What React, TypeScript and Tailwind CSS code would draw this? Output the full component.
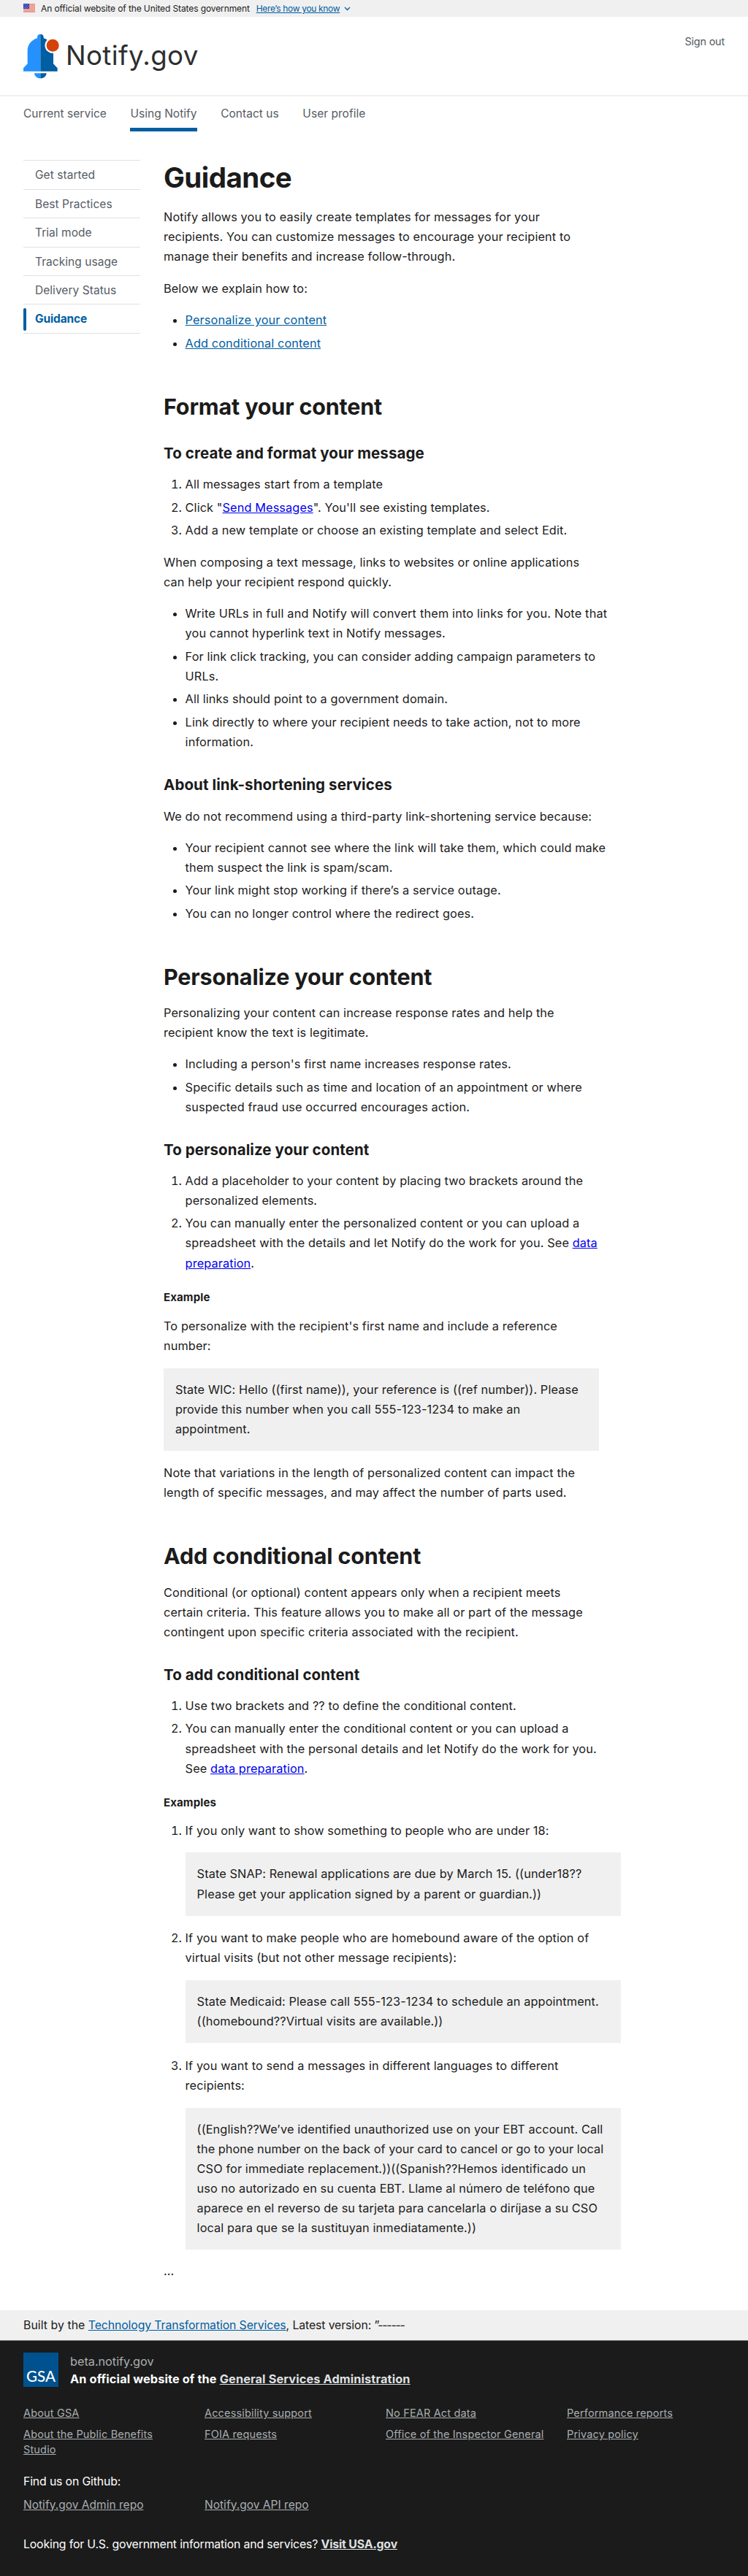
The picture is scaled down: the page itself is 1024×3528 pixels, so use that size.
import type { ReactNode } from 'react';

const BODY = 'text-[16.3px] leading-[27.136px] tracking-[0.0068em]';

function P({ children, className = 'mt-[17px]' }: { children: ReactNode; className?: string }) {
  return <p className={`whitespace-nowrap ${BODY} ${className}`}>{children}</p>;
}

function H2({ children }: { children: ReactNode }) {
  return (
    <h2 className="mt-[55.1px] whitespace-nowrap text-[30.5px] leading-9 font-bold tracking-[-0.0055em]">{children}</h2>
  );
}

function H3({ children, className = 'mt-[32.8px]' }: { children: ReactNode; className?: string }) {
  return (
    <h3 className={`whitespace-nowrap text-[20.5px] leading-6 font-bold tracking-[0.0045em] ${className}`}>
      {children}
    </h3>
  );
}

function H4({ children }: { children: ReactNode }) {
  return <h4 className="mt-[23px] text-[15px] leading-5 font-bold tracking-[0.008em]">{children}</h4>;
}

function Bullets({ items }: { items: ReactNode[] }) {
  return (
    <ul className={`mt-4 flex list-disc flex-col gap-[4.24px] whitespace-nowrap pl-[29.6px] ${BODY}`}>
      {items.map((item, i) => (
        <li key={i}>{item}</li>
      ))}
    </ul>
  );
}

function Steps({
  items,
  className = 'mt-[17px] gap-[4.24px]',
}: {
  items: ReactNode[];
  className?: string;
}) {
  return (
    <ol className={`flex list-decimal flex-col whitespace-nowrap pl-[29.6px] ${BODY} ${className}`}>
      {items.map((item, i) => (
        <li key={i}>{item}</li>
      ))}
    </ol>
  );
}

function Box({ children }: { children: ReactNode }) {
  return <div className={`mt-[16.5px] w-[596px] bg-[#f0f0f0] p-4 whitespace-nowrap ${BODY}`}>{children}</div>;
}

function A({ children }: { children: ReactNode }) {
  return (
    <a href="#" className="text-[#005ea2] underline">
      {children}
    </a>
  );
}

function RawLink({ children }: { children: ReactNode }) {
  return (
    <a href="#" className="text-[#0000ee] underline">
      {children}
    </a>
  );
}

function Flag() {
  return (
    <svg width="16" height="12" viewBox="0 0 16 12" aria-hidden="true">
      <rect width="16" height="12" fill="#f0a294" />
      <path d="M0 .5H16M0 11.5H16" stroke="#ea9384" />
      <rect width="8" height="7" fill="#2f44b4" />
      <path
        d="M1 1.5h1M3 1.5h1M5 1.5h1M2 3.5h1M4 3.5h1M6 3.5h1M1 5.5h1M3 5.5h1M5 5.5h1"
        stroke="#8f9bdc"
      />
    </svg>
  );
}

function Bell() {
  return (
    <svg width="50" height="62" viewBox="36 46 150 186" aria-hidden="true">
      <path d="M106 48C98 48 93 53 93 60V65C70 72 53 90 53 118V170L36 188V201H106Z" fill="#2491ff" />
      <path d="M106 48C114 48 119 53 119 60V65C142 72 159 90 159 118V170L176 188V201H106Z" fill="#005ea2" />
      <path d="M81 209H106V230C92 230 82 222 81 209Z" fill="#2491ff" />
      <path d="M131 209H106V230C120 230 130 222 131 209Z" fill="#005ea2" />
      <circle cx="156.5" cy="94.5" r="32" fill="#fff" />
      <circle cx="156.5" cy="94.5" r="25.5" fill="#d54309" />
    </svg>
  );
}

const sideLinks = ['Get started', 'Best Practices', 'Trial mode', 'Tracking usage', 'Delivery Status'];

const footerLinks: ReactNode[][] = [
  ['About GSA', 'Accessibility support', 'No FEAR Act data', 'Performance reports'],
  [
    <>
      About the Public Benefits
      <br />
      Studio
    </>,
    'FOIA requests',
    'Office of the Inspector General',
    'Privacy policy',
  ],
];

export default function App() {
  return (
    <div className="w-[1024px] bg-white font-['Inter',sans-serif] text-[#1b1b1b]">
      <div className="flex h-[22.5px] items-start bg-[#f0f0f0] pl-8 text-[12px] leading-[23px] whitespace-nowrap">
        <span className="mt-[5px]">
          <Flag />
        </span>
        <span className="ml-2 tracking-[-0.0092em]">An official website of the United States government</span>
        <a href="#" className="ml-[9px] tracking-[-0.0275em] text-[#005ea2] underline">
          Here’s how you know
        </a>
        <svg className="mt-[9px] ml-[6px]" width="9" height="6" viewBox="0 0 9 6" aria-hidden="true">
          <path d="M1 1L4.5 4.5L8 1" fill="none" stroke="#005ea2" strokeWidth="1.3" />
        </svg>
      </div>

      <header className="flex h-[109.5px] justify-between border-b-2 border-[#f0f0f0] pr-8 pl-8">
        <div className="flex pt-[23.5px]">
          <Bell />
          <span className="ml-[8px] text-[36.7px] leading-[60px] tracking-[0.01em] text-[#2d2e2f]">Notify.gov</span>
        </div>
        <a href="#" className="mt-[22.5px] text-[14.5px] leading-6 tracking-[-0.015em] text-[#565c65]">
          Sign out
        </a>
      </header>

      <nav className="flex h-12 gap-[32.6px] pl-8 text-[15.5px] leading-[47px] tracking-[0.002em] whitespace-nowrap text-[#565c65]">
        <a href="#">Current service</a>
        <a href="#" className="border-b-[5px] border-[#005ea2]">
          Using Notify
        </a>
        <a href="#">Contact us</a>
        <a href="#">User profile</a>
      </nav>

      <div className="flex h-[2984px] items-start gap-8 pl-8">
        <aside className="mt-[39.4px] w-40 border-b border-[#dfe1e2] text-[15.5px] tracking-[0.003em] text-[#565c65]">
          {sideLinks.map((label) => (
            <a key={label} href="#" className="block border-t border-[#dfe1e2] pt-px pl-4 leading-[37.4px]">
              {label}
            </a>
          ))}
          <a
            href="#"
            className="flex items-center gap-3 border-t border-[#dfe1e2] pt-px leading-[37.4px] font-bold tracking-[-0.01em] text-[#005ea2]"
          >
            <span className="h-[31px] w-1 rounded-full bg-[#005ea2]" />
            Guidance
          </a>
        </aside>

        <main className="pt-[38.7px]">
          <h1 className="text-[38.5px] leading-[48px] font-bold tracking-[-0.014em]">Guidance</h1>
          <P className="mt-[17px]">
            Notify allows you to easily create templates for messages for your
            <br />
            recipients. You can customize messages to encourage your recipient to
            <br />
            manage their benefits and increase follow-through.
          </P>
          <P>Below we explain how to:</P>
          <Bullets items={[<A>Personalize your content</A>, <A>Add conditional content</A>]} />

          <H2>Format your content</H2>
          <H3 className="mt-[34.3px]">To create and format your message</H3>
          <Steps
            items={[
              'All messages start from a template',
              <>
                Click "<RawLink>Send Messages</RawLink>". You'll see existing templates.
              </>,
              'Add a new template or choose an existing template and select Edit.',
            ]}
          />
          <P>
            When composing a text message, links to websites or online applications
            <br />
            can help your recipient respond quickly.
          </P>
          <Bullets
            items={[
              <>
                <span className="tracking-[0.0112em]">
                  Write URLs in full and Notify will convert them into links for you. Note that
                </span>
                <br />
                you cannot hyperlink text in Notify messages.
              </>,
              <>
                For link click tracking, you can consider adding campaign parameters to
                <br />
                URLs.
              </>,
              'All links should point to a government domain.',
              <>
                Link directly to where your recipient needs to take action, not to more
                <br />
                information.
              </>,
            ]}
          />
          <H3>About link-shortening services</H3>
          <P className="mt-[18px]">We do not recommend using a third-party link-shortening service because:</P>
          <Bullets
            items={[
              <>
                Your recipient cannot see where the link will take them, which could make
                <br />
                them suspect the link is spam/scam.
              </>,
              'Your link might stop working if there’s a service outage.',
              'You can no longer control where the redirect goes.',
            ]}
          />

          <H2>Personalize your content</H2>
          <P className="mt-[18px]">
            Personalizing your content can increase response rates and help the
            <br />
            recipient know the text is legitimate.
          </P>
          <Bullets
            items={[
              "Including a person's first name increases response rates.",
              <>
                Specific details such as time and location of an appointment or where
                <br />
                suspected fraud use occurred encourages action.
              </>,
            ]}
          />
          <H3>To personalize your content</H3>
          <Steps
            items={[
              <>
                Add a placeholder to your content by placing two brackets around the
                <br />
                personalized elements.
              </>,
              <>
                You can manually enter the personalized content or you can upload a
                <br />
                spreadsheet with the details and let Notify do the work for you. See{' '}
                <RawLink>
                  data
                  <br />
                  preparation
                </RawLink>
                .
              </>,
            ]}
          />
          <H4>Example</H4>
          <P className="mt-4">
            To personalize with the recipient's first name and include a reference
            <br />
            number:
          </P>
          <Box>
            State WIC: Hello ((first name)), your reference is ((ref number)). Please
            <br />
            provide this number when you call 555-123-1234 to make an
            <br />
            appointment.
          </Box>
          <P>
            Note that variations in the length of personalized content can impact the
            <br />
            length of specific messages, and may affect the number of parts used.
          </P>

          <H2>Add conditional content</H2>
          <P className="mt-[18.5px]">
            Conditional (or optional) content appears only when a recipient meets
            <br />
            certain criteria. This feature allows you to make all or part of the message
            <br />
            contingent upon specific criteria associated with the recipient.
          </P>
          <H3>To add conditional content</H3>
          <Steps
            items={[
              'Use two brackets and ?? to define the conditional content.',
              <>
                You can manually enter the conditional content or you can upload a
                <br />
                spreadsheet with the personal details and let Notify do the work for you.
                <br />
                See <RawLink>data preparation</RawLink>.
              </>,
            ]}
          />
          <H4>Examples</H4>
          <Steps
            className="mt-[15px] gap-[17.5px]"
            items={[
              <>
                If you only want to show something to people who are under 18:
                <Box>
                  State SNAP: Renewal applications are due by March 15. ((under18??
                  <br />
                  Please get your application signed by a parent or guardian.))
                </Box>
              </>,
              <>
                If you want to make people who are homebound aware of the option of
                <br />
                virtual visits (but not other message recipients):
                <Box>
                  State Medicaid: Please call 555-123-1234 to schedule an appointment.
                  <br />
                  ((homebound??Virtual visits are available.))
                </Box>
              </>,
              <>
                If you want to send a messages in different languages to different
                <br />
                recipients:
                <Box>
                  ((English??We’ve identified unauthorized use on your EBT account. Call
                  <br />
                  <span className="tracking-[0.0026em]">
                    the phone number on the back of your card to cancel or go to your local
                  </span>
                  <br />
                  CSO for immediate replacement.))((Spanish??Hemos identificado un
                  <br />
                  uso no autorizado en su cuenta EBT. Llame al número de teléfono que
                  <br />
                  aparece en el reverso de su tarjeta para cancelarla o diríjase a su CSO
                  <br />
                  local para que se la sustituyan inmediatamente.))
                </Box>
              </>,
            ]}
          />
          <P className="mt-4">...</P>
        </main>
      </div>

      <div className="h-[41px] bg-[#f0f0f0] pl-8 text-[15.8px] leading-[42px] tracking-[-0.0065em] whitespace-nowrap">
        <span className="tracking-[0.004em]">Built by the </span>
        <A>Technology Transformation Services</A>, Latest version: <span className="tracking-[-0.075em]">”------</span>
      </div>

      <footer className="h-[323px] border-t border-[#71767a] bg-[#1b1b1b] px-8 whitespace-nowrap text-[#a9aeb1]">
        <div className="flex gap-4 pt-[16px]">
          <div className="flex h-[47px] w-12 items-end justify-center bg-[#00528f] pb-[7px] font-['Lato',sans-serif] text-[20.5px] leading-[16px] font-medium text-white">
            GSA
          </div>
          <div className="text-[16.3px] leading-6">
            <p className="tracking-[-0.002em]">beta.notify.gov</p>
            <p className="font-bold tracking-[0.008em] text-white">
              An official website of the{' '}
              <a href="#" className="text-[#dfe1e2] underline">
                General Services Administration
              </a>
            </p>
          </div>
        </div>

        <div className="mt-6 flex flex-col gap-2 text-[14.5px] leading-[21.2px] tracking-[0.011em]">
          {footerLinks.map((row, i) => (
            <div key={i} className="grid grid-cols-[248px_248px_248px_1fr]">
              {row.map((label, j) => (
                <a key={j} href="#" className="underline">
                  {label}
                </a>
              ))}
            </div>
          ))}
        </div>

        <p className="mt-[21.5px] text-[15.8px] leading-6 tracking-[-0.009em] text-white">Find us on Github:</p>
        <div className="mt-[7.5px] grid grid-cols-[248px_1fr] text-[15.5px] leading-6 tracking-[0.0014em]">
          <a href="#" className="underline">
            Notify.gov Admin repo
          </a>
          <a href="#" className="underline">
            Notify.gov API repo
          </a>
        </div>
        <p className="mt-[30px] text-[15.8px] leading-6 tracking-[-0.009em] text-white">
          Looking for U.S. government information and services?{' '}
          <a href="#" className="font-bold text-[#dfe1e2] underline">
            Visit USA.gov
          </a>
        </p>
      </footer>
    </div>
  );
}
